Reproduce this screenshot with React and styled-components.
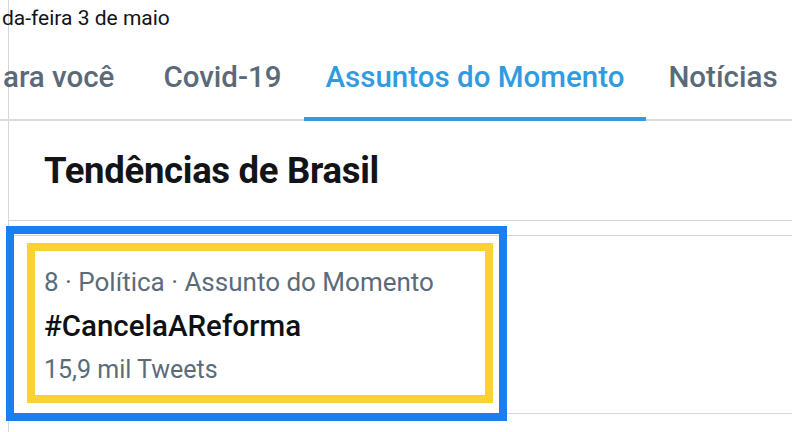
import React from "react";
import styled, { createGlobalStyle } from "styled-components";

const Global = createGlobalStyle`
  html, body { margin: 0; padding: 0; background: #ffffff; }
  body { width: 792px; height: 432px; overflow: hidden; font-family: Roboto, "Liberation Sans", Arial, sans-serif; }
`;

const Column = styled.div`
  margin-left: 8px;
  border-left: 1px solid #d3d7db;
  height: 432px;
  display: flex;
  flex-direction: column;
`;

const DateLine = styled.div`
  margin-left: -8px;
  height: 40px;
  display: flex;
  align-items: center;
  padding-left: 1px;
  padding-bottom: 4px;
  box-sizing: border-box;
  font-size: 21px;
  color: #111418;
  white-space: nowrap;
`;

const TabBar = styled.div`
  margin-left: -9px;
  height: 81px;
  display: flex;
  align-items: stretch;
  border-bottom: 2px solid #dadde0;
  box-sizing: border-box;
  white-space: nowrap;
`;

const Tab = styled.div`
  position: relative;
  display: flex;
  align-items: center;
  padding: 0 ${(p) => p.$padR ?? 22}px 6px ${(p) => p.$padL ?? 22}px;
  font-size: 29.5px;
  font-weight: 500;
  color: ${(p) => (p.$active ? "#2f9be0" : "#5a6a79")};
  &::after {
    content: "";
    display: ${(p) => (p.$active ? "block" : "none")};
    position: absolute;
    left: 0;
    right: 0;
    bottom: -2px;
    height: 4px;
    background: #2f9be0;
  }
`;

const Header = styled.div`
  height: 100px;
  display: flex;
  align-items: center;
  padding-left: 35px;
  border-bottom: 1px solid #d3d7db;
  box-sizing: border-box;
  font-size: 36.5px;
  font-weight: 700;
  color: #121417;
  letter-spacing: -0.3px;
`;

const Spacer = styled.div`
  height: 15px;
  border-bottom: 1px solid #d3d7db;
  box-sizing: border-box;
`;

const Trend = styled.div`
  position: relative;
  height: 178px;
  border-bottom: 1px solid #d3d7db;
  box-sizing: border-box;
  padding: 24px 0 0 35px;
  display: flex;
  flex-direction: column;
`;

const Meta = styled.div`
  font-size: ${(p) => p.$size}px;
  color: #5b6b7a;
  line-height: 44px;
  white-space: nowrap;
`;

const Title = styled.div`
  font-size: 29.5px;
  color: #0e1114;
  line-height: 44px;
  font-weight: 500;
`;

const BlueFrame = styled.div`
  position: absolute;
  left: -3px;
  top: -10px;
  width: 501px;
  height: 195px;
  border: 8px solid #1c7ff0;
  box-sizing: border-box;
`;

const YellowFrame = styled.div`
  position: absolute;
  left: 13px;
  top: 9px;
  width: 466px;
  height: 160px;
  border: 8px solid #fcd233;
  box-sizing: border-box;
`;

export default function App() {
  return (
    <>
      <Global />
      <Column>
        <DateLine>da-feira 3 de maio</DateLine>
        <TabBar>
          <Tab $padL={3} $padR={27}>ara você</Tab>
          <Tab>Covid-19</Tab>
          <Tab $active>Assuntos do Momento</Tab>
          <Tab>Notícias</Tab>
        </TabBar>
        <Header>Tendências de Brasil</Header>
        <Spacer />
        <Trend>
          <Meta $size={26}>8 · Política · Assunto do Momento</Meta>
          <Title>#CancelaAReforma</Title>
          <Meta $size={25}>15,9 mil Tweets</Meta>
          <BlueFrame>
            <YellowFrame />
          </BlueFrame>
        </Trend>
      </Column>
    </>
  );
}
